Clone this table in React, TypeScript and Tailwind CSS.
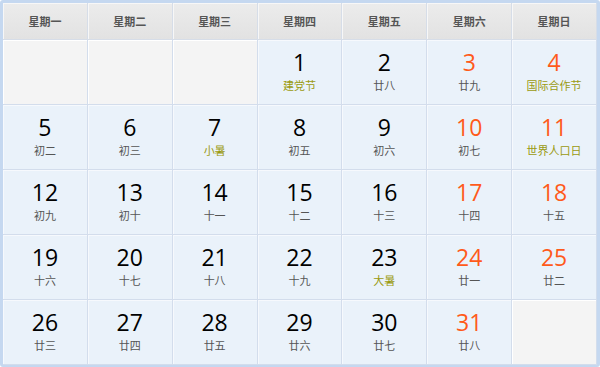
const weekdays = ['星期一', '星期二', '星期三', '星期四', '星期五', '星期六', '星期日']

interface Day {
  n: number
  sub: string
  fest?: boolean
}

const lunar: Record<number, [string, boolean?]> = {
  1: ['建党节', true], 2: ['廿八'], 3: ['廿九'], 4: ['国际合作节', true],
  5: ['初二'], 6: ['初三'], 7: ['小暑', true], 8: ['初五'], 9: ['初六'], 10: ['初七'], 11: ['世界人口日', true],
  12: ['初九'], 13: ['初十'], 14: ['十一'], 15: ['十二'], 16: ['十三'], 17: ['十四'], 18: ['十五'],
  19: ['十六'], 20: ['十七'], 21: ['十八'], 22: ['十九'], 23: ['大暑', true], 24: ['廿一'], 25: ['廿二'],
  26: ['廿三'], 27: ['廿四'], 28: ['廿五'], 29: ['廿六'], 30: ['廿七'], 31: ['廿八'],
}

const cells: (Day | null)[] = [
  null, null, null,
  ...Array.from({ length: 31 }, (_, i) => ({ n: i + 1, sub: lunar[i + 1][0], fest: !!lunar[i + 1][1] })),
  null,
]

const font = { fontFamily: '"Noto Sans CJK SC", "Noto Sans", sans-serif' }

export default function App() {
  return (
    <div className="w-[600px] h-[367px] bg-[#c5d8f0] pt-[3px] pl-[3px] pr-[3px] pb-[2px] rounded-[3px]" style={font}>
      <div className="grid grid-cols-7 grid-rows-[37px_repeat(5,1fr)] h-full bg-white">
        {weekdays.map((w) => (
          <div
            key={w}
            className="flex items-center justify-center bg-gradient-to-b from-[#ececec] to-[#e2e2e2] border-r border-b border-[#d6dde8] shadow-[inset_1px_1px_0_#f7f7f7] text-[11px] font-bold text-[#555]"
          >
            {w}
          </div>
        ))}
        {cells.map((c, i) => {
          const col = i % 7
          const weekend = col >= 5
          if (!c) {
            return (
              <div
                key={i}
                className="bg-[#f4f4f4] border-r border-b border-[#d3ddec] shadow-[inset_1px_1px_0_#ffffff]"
              />
            )
          }
          return (
            <div
              key={i}
              className="flex flex-col items-center pt-[9px] bg-[#eaf2fa] border-r border-b border-[#d3ddec] shadow-[inset_1px_1px_0_#f6f9fd]"
            >
              <span
                className={`text-[23px] leading-[27px] ${weekend ? 'text-[#ff5a1a]' : 'text-black'}`}
                style={{ fontFamily: '"Open Sans", "Noto Sans", sans-serif' }}
              >
                {c.n}
              </span>
              <span className={`text-[11px] leading-[16px] mt-[1px] ${c.fest ? 'text-[#9a9a10]' : 'text-[#555]'}`}>
                {c.sub}
              </span>
            </div>
          )
        })}
      </div>
    </div>
  )
}
